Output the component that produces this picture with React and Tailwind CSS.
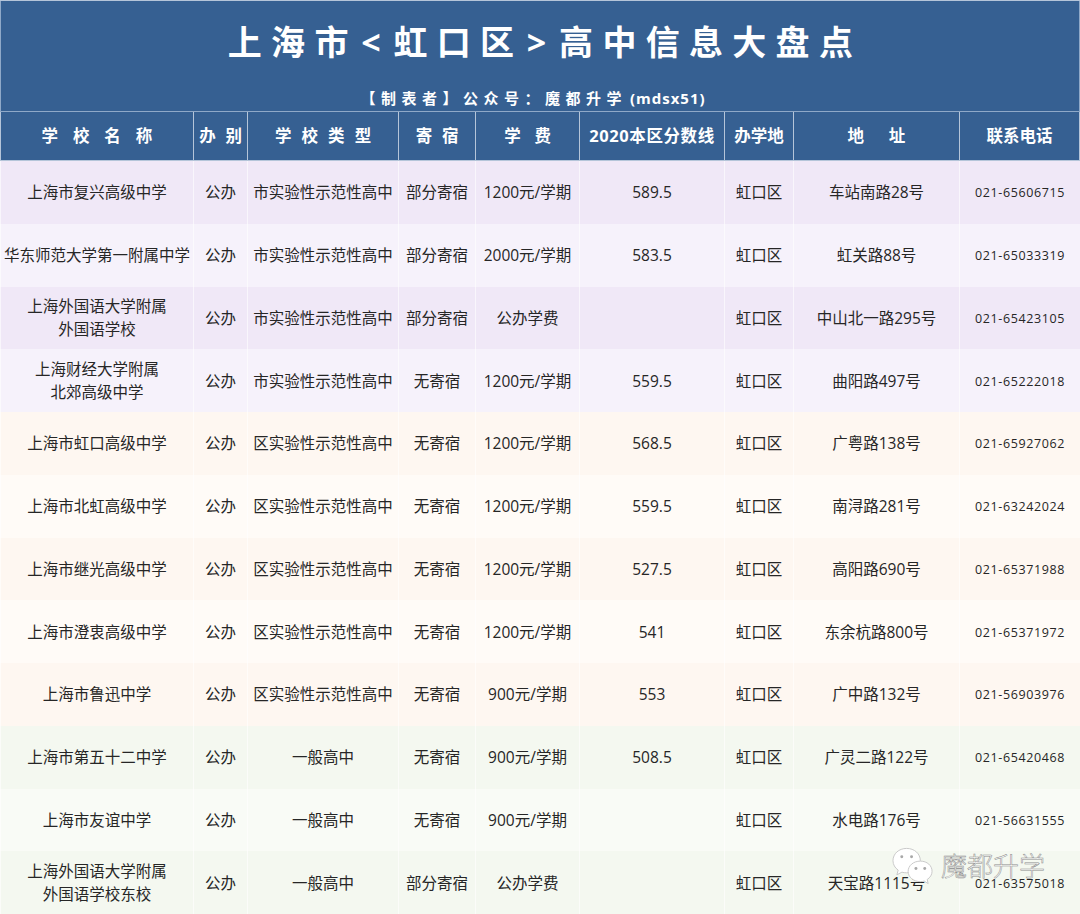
import React from 'react';

const font = "font-['Open_Sans','Noto_Sans_CJK_SC',sans-serif]";
const cols = 'grid grid-cols-[194px_54px_151px_77px_104px_145px_69px_166px_120px]';

const headers = [
  { text: '学 校 名 称', cls: 'tracking-[5.300px] pl-[5px]' },
  { text: '办 别', cls: 'tracking-[2.800px] pl-[3px]' },
  { text: '学 校 类 型', cls: 'tracking-[2.900px] pl-[3px]' },
  { text: '寄 宿', cls: 'tracking-[2.800px] pl-[3px]' },
  { text: '学 费', cls: 'tracking-[4.800px] pl-[5px]' },
  { text: '2020本区分数线', cls: 'tracking-[0.600px]' },
  { text: '办学地', cls: '' },
  { text: '地 址', cls: 'tracking-[10.300px] pl-[10px]' },
  { text: '联系电话', cls: '' },
];

const rows = [
  { name: ['上海市复兴高级中学'], type: '市实验性示范性高中', board: '部分寄宿', fee: '1200元/学期', score: '589.5', addr: '车站南路28号', tel: '021-65606715', bg: 'bg-[#f0e8f7]' },
  { name: ['华东师范大学第一附属中学'], type: '市实验性示范性高中', board: '部分寄宿', fee: '2000元/学期', score: '583.5', addr: '虹关路88号', tel: '021-65033319', bg: 'bg-[#f6f2fb]' },
  { name: ['上海外国语大学附属', '外国语学校'], type: '市实验性示范性高中', board: '部分寄宿', fee: '公办学费', score: '', addr: '中山北一路295号', tel: '021-65423105', bg: 'bg-[#f0e8f7]' },
  { name: ['上海财经大学附属', '北郊高级中学'], type: '市实验性示范性高中', board: '无寄宿', fee: '1200元/学期', score: '559.5', addr: '曲阳路497号', tel: '021-65222018', bg: 'bg-[#f6f2fb]' },
  { name: ['上海市虹口高级中学'], type: '区实验性示范性高中', board: '无寄宿', fee: '1200元/学期', score: '568.5', addr: '广粤路138号', tel: '021-65927062', bg: 'bg-[#fef7f1]' },
  { name: ['上海市北虹高级中学'], type: '区实验性示范性高中', board: '无寄宿', fee: '1200元/学期', score: '559.5', addr: '南浔路281号', tel: '021-63242024', bg: 'bg-[#fffbf7]' },
  { name: ['上海市继光高级中学'], type: '区实验性示范性高中', board: '无寄宿', fee: '1200元/学期', score: '527.5', addr: '高阳路690号', tel: '021-65371988', bg: 'bg-[#fef7f1]' },
  { name: ['上海市澄衷高级中学'], type: '区实验性示范性高中', board: '无寄宿', fee: '1200元/学期', score: '541', addr: '东余杭路800号', tel: '021-65371972', bg: 'bg-[#fffbf7]' },
  { name: ['上海市鲁迅中学'], type: '区实验性示范性高中', board: '无寄宿', fee: '900元/学期', score: '553', addr: '广中路132号', tel: '021-56903976', bg: 'bg-[#fef7f1]' },
  { name: ['上海市第五十二中学'], type: '一般高中', board: '无寄宿', fee: '900元/学期', score: '508.5', addr: '广灵二路122号', tel: '021-65420468', bg: 'bg-[#f4f8f0]' },
  { name: ['上海市友谊中学'], type: '一般高中', board: '无寄宿', fee: '900元/学期', score: '', addr: '水电路176号', tel: '021-56631555', bg: 'bg-[#f9fbf6]' },
  { name: ['上海外国语大学附属', '外国语学校东校'], type: '一般高中', board: '部分寄宿', fee: '公办学费', score: '', addr: '天宝路1115号', tel: '021-63575018', bg: 'bg-[#f4f8f0]' },
];

const Cell = ({ children, className = '' }) => (
  <div className={`flex flex-col items-center justify-center pt-px first:border-l border-r border-white/60 last:border-r-0 text-center ${className}`}>
    {children}
  </div>
);

const WeChatMark = () => (
  <svg width="43" height="38" viewBox="0 0 44 38" className="shrink-0">
    <path d="M15 1C7 1 1 6.500 1 13.500c0 4 2 7.400 5.300 9.700L5 28l5.200-2.700c1.500.4 3.100.7 4.800.7 8 0 14-5.500 14-12.500S23 1 15 1z" fill="#fff" stroke="#c9c9c9" strokeWidth="1" />
    <path d="M29 14c-7 0-12.500 4.600-12.500 10.500S22 35 29 35c1.400 0 2.700-.2 3.900-.6L37 37l-1-4.200c3.100-2 5-4.900 5-8.300C41 18.600 36 14 29 14z" fill="#fff" stroke="#c9c9c9" strokeWidth="1" />
    <circle cx="10" cy="9.500" r="1.500" fill="#a8a8a8" />
    <circle cx="20" cy="9.500" r="1.500" fill="#a8a8a8" />
    <circle cx="24.500" cy="21.500" r="1.500" fill="#a8a8a8" />
    <circle cx="33.500" cy="21.500" r="1.500" fill="#a8a8a8" />
  </svg>
);

export default function App() {
  return (
    <div className={`relative w-[1080px] h-[914px] overflow-hidden bg-[#b5c5d9] ${font}`}>
      {/* Title */}
      <div className="h-[111px] mt-px flex flex-col items-center bg-[#366092] border-x border-b border-[#8fa9c8] text-white">
        <h1 className="mt-[19px] pl-[10px] h-[44px] leading-[44px] text-[34px] font-bold tracking-[9.300px] whitespace-nowrap">
          上海市<span className="mx-[3.500px]">&lt;</span>虹口区<span className="mx-[3.500px]">&gt;</span>高中信息大盘点
        </h1>
        <p className="mt-[24px] pr-[14px] h-[20px] leading-[20px] text-[15px] font-bold tracking-[5.500px] whitespace-nowrap">
          【制表者】公众号：魔都升学<span className="ml-[3px] tracking-[1px]">(mdsx51)</span>
        </p>
      </div>

      {/* Header */}
      <div className={`${cols} h-[49px] bg-[#366092] border-b border-[#b5c5d9] text-white text-[16.500px] font-bold`}>
        {headers.map((h) => (
          <div key={h.text} className={`flex items-center justify-center pt-px first:border-l border-r border-[#b5c5d9] whitespace-pre ${h.cls}`}>
            {h.text}
          </div>
        ))}
      </div>

      {/* Rows */}
      {rows.map((r) => (
        <div key={r.tel} className={`${cols} h-[62.750px] ${r.bg} text-[15.500px] leading-[23px] text-[#262626]`}>
          <Cell>
            {r.name.map((line) => (
              <span key={line} className="whitespace-nowrap">{line}</span>
            ))}
          </Cell>
          <Cell>公办</Cell>
          <Cell>{r.type}</Cell>
          <Cell>{r.board}</Cell>
          <Cell>{r.fee}</Cell>
          <Cell>{r.score}</Cell>
          <Cell>虹口区</Cell>
          <Cell>{r.addr}</Cell>
          <Cell className="text-[12.500px] tracking-[0.600px]">{r.tel}</Cell>
        </div>
      ))}

      {/* Watermark */}
      <div className="absolute left-[892px] top-[847px] flex items-center gap-[6px]">
        <WeChatMark />
        <span className="text-[26px] leading-[34px] text-white/80 [-webkit-text-stroke:0.5px_#8a8a8a] font-light">魔都升学</span>
      </div>
    </div>
  );
}
